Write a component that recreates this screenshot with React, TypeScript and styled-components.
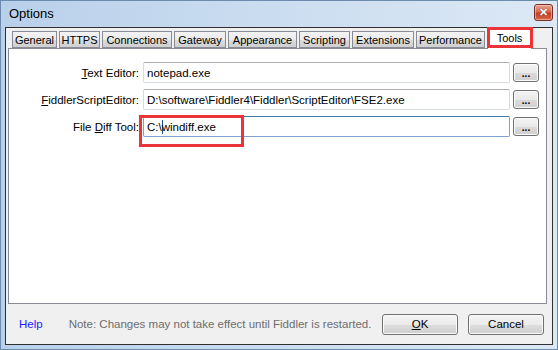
import { createGlobalStyle } from 'styled-components';
import styled from 'styled-components';

const GlobalStyle = createGlobalStyle`
  html, body {
    margin: 0;
    padding: 0;
    background: #ffffff;
  }
  * {
    box-sizing: border-box;
  }
`;

const Window = styled.div`
  width: 558px;
  height: 350px;
  display: flex;
  flex-direction: column;
  border: 1px solid #6d8bad;
  padding: 0 4px 4px 4px;
  background: linear-gradient(to right, #b9d0ea 0%, #c9dcf0 45%, #dce8f5 100%);
  font-family: 'Liberation Sans', Arial, sans-serif;
`;

const TitleBar = styled.div`
  height: 26px;
  display: flex;
  align-items: center;
  justify-content: space-between;
  padding: 0 0 0 4px;
`;

const Title = styled.span`
  font-size: 13px;
  color: #000;
  margin-top: -1px;
`;

const CloseButton = styled.div`
  width: 19px;
  height: 17px;
  margin-top: -3px;
  border: 1px solid #7a2f22;
  border-radius: 3px;
  background: linear-gradient(to bottom, #e9a592 0%, #d6684f 45%, #c23d22 55%, #d86a4c 100%);
  box-shadow: inset 0 0 0 1px rgba(255, 220, 210, 0.5);
  display: flex;
  align-items: center;
  justify-content: center;
  color: #fff;
  font-size: 11px;
  font-weight: bold;
  line-height: 1;
  text-shadow: 0 0 1px #5a1a10;
`;

const Client = styled.div`
  flex: 1;
  display: flex;
  flex-direction: column;
  border: 1px solid #303030;
  background: #f0f0f0;
`;

const TabArea = styled.div`
  display: flex;
  flex-direction: column;
  margin: 0 5px 0 2px;
  flex: 1;
`;

const TabStrip = styled.div`
  display: flex;
  align-items: flex-end;
  gap: 2px;
  height: 20px;
  padding-left: 4px;
  position: relative;
  z-index: 1;
`;

const Tab = styled.div<{ $w: number; $active?: boolean }>`
  position: relative;
  width: ${(p) => p.$w}px;
  height: ${(p) => (p.$active ? '21px' : '17px')};
  margin-bottom: ${(p) => (p.$active ? '-1px' : '0')};
  border: 1px solid #898c95;
  border-bottom: ${(p) => (p.$active ? 'none' : '1px solid #898c95')};
  background: ${(p) =>
    p.$active ? '#ffffff' : 'linear-gradient(to bottom, #f3f3f3 0%, #ebebeb 50%, #dddddd 51%, #cfcfcf 100%)'};
  font-size: 11px;
  color: #000;
  display: flex;
  align-items: ${(p) => (p.$active ? 'flex-start' : 'center')};
  justify-content: center;
  padding-top: ${(p) => (p.$active ? '3px' : '0')};
  white-space: nowrap;
`;

const Highlight = styled.div<{ $t: number; $l: number; $w: number; $h: number }>`
  position: absolute;
  top: ${(p) => p.$t}px;
  left: ${(p) => p.$l}px;
  width: ${(p) => p.$w}px;
  height: ${(p) => p.$h}px;
  border: 3px solid #ec3337;
  pointer-events: none;
`;

const Page = styled.div`
  position: relative;
  flex: 1;
  border: 1px solid #898c95;
  background: #ffffff;
  padding: 13px 7px 0 0;
  display: grid;
  grid-template-columns: 131px 367px 26px;
  grid-auto-rows: 21px;
  column-gap: 3px;
  row-gap: 6px;
  align-content: start;
`;

const Label = styled.label`
  font-size: 11.5px;
  color: #000;
  text-align: right;
  padding-right: 1px;
  align-self: center;
  white-space: nowrap;
`;

const TextBox = styled.div<{ $focused?: boolean }>`
  height: 21px;
  border: 1px solid ${(p) => (p.$focused ? '#7da2ce' : '#d5dbe2')};
  border-top-color: ${(p) => (p.$focused ? '#3d7bad' : '#abadb3')};
  border-radius: 2px;
  background: #fff;
  font-size: 11.5px;
  color: #000;
  display: flex;
  align-items: center;
  padding-left: 3px;
  white-space: nowrap;
  overflow: hidden;
`;

const Caret = styled.span`
  display: inline-block;
  width: 1px;
  height: 14px;
  margin: 0 -1px 0 0;
  background: #1c4f9c;
`;

const DotsButton = styled.div`
  width: 26px;
  height: 19px;
  margin-top: 1px;
  border: 1px solid #707070;
  border-radius: 3px;
  background: linear-gradient(to bottom, #f4f4f4 0%, #e9e9e9 50%, #dbdbdb 51%, #cfcfcf 100%);
  box-shadow: inset 0 0 0 1px #fbfbfb;
  font-size: 10px;
  font-weight: bold;
  display: flex;
  align-items: center;
  justify-content: center;
  padding-top: 2px;
  color: #000;
`;

const BottomBar = styled.div`
  height: 40px;
  display: flex;
  align-items: center;
  padding: 0 8px 0 13px;
`;

const HelpLink = styled.span`
  font-size: 11.5px;
  color: #2020ff;
`;

const Note = styled.span`
  font-size: 11.5px;
  color: #6d6d6d;
  margin-left: 26px;
  flex: 1;
  white-space: nowrap;
`;

const DialogButton = styled.div`
  width: 76px;
  height: 21px;
  margin-left: 10px;
  border: 1px solid #707070;
  border-radius: 3px;
  background: linear-gradient(to bottom, #f4f4f4 0%, #ebebeb 50%, #dddddd 51%, #cfcfcf 100%);
  box-shadow: inset 0 0 0 1px #fbfbfb;
  font-size: 11.5px;
  color: #000;
  display: flex;
  align-items: center;
  justify-content: center;
`;

const tabs: { name: string; w: number }[] = [
  { name: 'General', w: 45 },
  { name: 'HTTPS', w: 41 },
  { name: 'Connections', w: 70 },
  { name: 'Gateway', w: 52 },
  { name: 'Appearance', w: 69 },
  { name: 'Scripting', w: 51 },
  { name: 'Extensions', w: 62 },
  { name: 'Performance', w: 69 },
];

export default function App() {
  return (
    <>
      <GlobalStyle />
      <Window>
        <TitleBar>
          <Title>Options</Title>
          <CloseButton>✕</CloseButton>
        </TitleBar>
        <Client>
          <TabArea>
            <TabStrip>
              {tabs.map((t) => (
                <Tab key={t.name} $w={t.w}>
                  {t.name}
                </Tab>
              ))}
              <Tab $w={45} $active>
                Tools
                <Highlight $t={-2} $l={-1} $w={46} $h={21} />
              </Tab>
            </TabStrip>
            <Page>
              <Label>
                <u>T</u>ext Editor:
              </Label>
              <TextBox>notepad.exe</TextBox>
              <DotsButton>...</DotsButton>

              <Label>
                <u>F</u>iddlerScriptEditor:
              </Label>
              <TextBox>D:\software\Fiddler4\Fiddler\ScriptEditor\FSE2.exe</TextBox>
              <DotsButton>...</DotsButton>

              <Label>
                File <u>D</u>iff Tool:
              </Label>
              <TextBox $focused>
                C:\<Caret />windiff.exe
              </TextBox>
              <DotsButton>...</DotsButton>

              <Highlight $t={66} $l={130} $w={105} $h={32} />
            </Page>
          </TabArea>
          <BottomBar>
            <HelpLink>Help</HelpLink>
            <Note>Note: Changes may not take effect until Fiddler is restarted.</Note>
            <DialogButton>
              <u>O</u>K
            </DialogButton>
            <DialogButton>Cancel</DialogButton>
          </BottomBar>
        </Client>
      </Window>
    </>
  );
}
